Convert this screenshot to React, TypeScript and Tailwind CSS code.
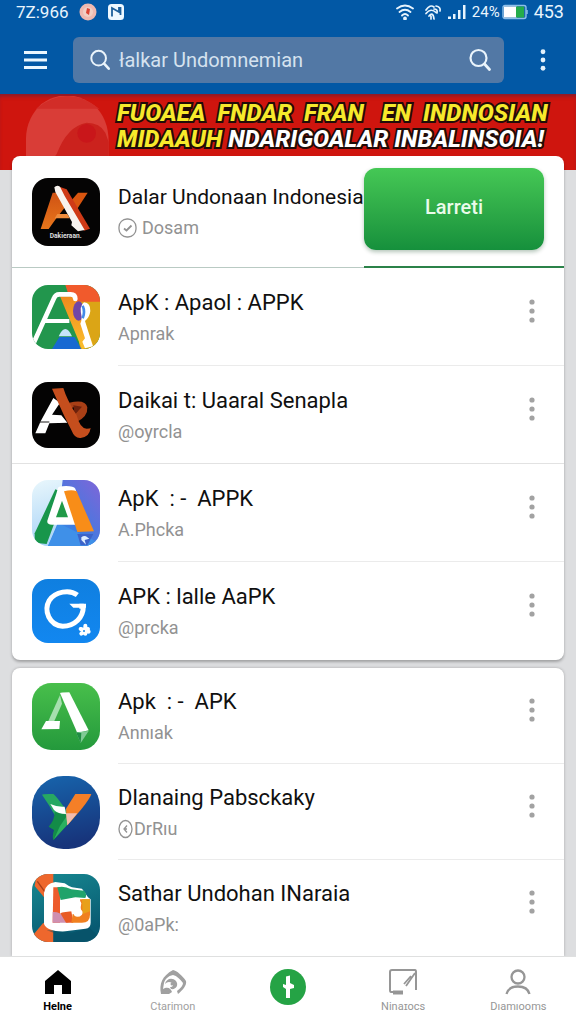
import type { ReactNode } from "react";

type AppRow = {
  title: string;
  subtitle: string;
  badge?: "check" | "ring";
  icon: ReactNode;
  divider?: "inset" | "full";
};

function Dots({ className }: { className: string }) {
  return (
    <svg viewBox="0 0 6 24" className={className} fill="currentColor" aria-hidden="true">
      <circle cx="3" cy="3" r="2.6" />
      <circle cx="3" cy="12" r="2.6" />
      <circle cx="3" cy="21" r="2.6" />
    </svg>
  );
}

function SearchGlyph({ className }: { className: string }) {
  return (
    <svg viewBox="0 0 24 24" className={className} fill="none" stroke="currentColor" strokeWidth="2.2" strokeLinecap="round" aria-hidden="true">
      <circle cx="10.5" cy="10" r="8" />
      <path d="M16.500 16 21.500 21.500" strokeWidth="2.8" />
    </svg>
  );
}

function BlackAxIcon() {
  return (
    <svg viewBox="0 0 204 204" className="h-[68px] w-[68px]" aria-hidden="true">
      <defs>
        <linearGradient id="ax" x1="0" y1="0" x2="0" y2="1">
          <stop offset="0" stopColor="#cf5214" />
          <stop offset="1" stopColor="#e8761b" />
        </linearGradient>
      </defs>
      <rect width="204" height="204" rx="48" fill="#050404" />
      <path d="M62 44H78L100 86 72 122 50 153H26Z" fill="url(#ax)" />
      <path d="M138 44h29l-36 56-20-24Z" fill="#d9550f" />
      <path d="M82 26 104 34 174 152 156 158 84 58Z" fill="#cf3a17" />
      <path d="M67 28Q74 20 84 26L98 54 158 156 138 160 118 142 120 132 70 42Z" fill="#f8f3ef" />
      <path d="M76 108h30l8 13H68Z" fill="#ef8c3c" />
      <text x="101" y="181" textAnchor="middle" fill="#dedede" fontSize="20" fontWeight="700" fontFamily="Roboto, sans-serif">Dakieraan.</text>
    </svg>
  );
}

function RainbowIcon() {
  return (
    <svg viewBox="0 0 204 192" className="h-16 w-[68px]" aria-hidden="true">
      <defs>
        <clipPath id="rb"><rect width="204" height="192" rx="48" /></clipPath>
        <linearGradient id="ry" x1="0" y1="0" x2="0" y2="1">
          <stop offset="0" stopColor="#f08a1e" />
          <stop offset="1" stopColor="#fbbf2c" />
        </linearGradient>
      </defs>
      <g clipPath="url(#rb)">
        <rect width="204" height="192" fill="#22964d" />
        <path d="M100 0h104v60h-60l-34-30Z" fill="#f15a2c" />
        <path d="M124 50h80v142h-60Z" fill="#dba516" />
        <path d="M60 192 82 156h46l20 36Z" fill="#1769d2" />
        <path d="M80 154q20-44 40 0Z" fill="#c6e4fa" />
        <path d="M84 34h46l54 148-34 10Z" fill="url(#ry)" />
        <path d="M6 172 66 40q4-12 16-12h34q14 0 14 14" fill="none" stroke="#fff" strokeWidth="14" strokeLinecap="round" strokeLinejoin="round" />
        <path d="M38 108h74" stroke="#fff" strokeWidth="12" />
        <ellipse cx="140" cy="78" rx="17" ry="29" fill="#7146a5" />
        <path d="M156 52q20 2 19 26-2 18-16 30l10 32 14 44-24 6-8-20 8-10-14-44q4-8 4-20-8-34 7-44Z" fill="#fff" />
        <path d="M152 62q8 18 0 38" fill="none" stroke="#448be8" strokeWidth="8" />
      </g>
    </svg>
  );
}

function BlackArIcon() {
  return (
    <svg viewBox="0 0 204 198" className="h-[66px] w-[68px]" aria-hidden="true">
      <rect width="204" height="198" rx="48" fill="#040303" />
      <path d="M64 48 84 62 60 98 88 100 106 122 52 124 40 154H10L26 118Z" fill="#fff" />
      <path d="M20 120h32" stroke="#1a1a1a" strokeWidth="3" />
      <path d="M112 62q48-12 54 14 2 28-32 44l-16-22q22-8 20-18-8-10-22 0Z" fill="#a83f16" />
      <path d="M124 70 150 74 128 98Z" fill="#6d210c" />
      <path d="M60 20 94 18q10 34 40 82 10 40 30 40 10 0 12-2-4 28-30 30-18 2-28-24-22-42-42-88Z" fill="#c54e1d" />
    </svg>
  );
}

function BlueAIcon() {
  return (
    <svg viewBox="0 0 204 198" className="h-[66px] w-[68px]" aria-hidden="true">
      <defs>
        <clipPath id="ba"><rect width="204" height="198" rx="48" /></clipPath>
        <linearGradient id="bg1" x1="0" y1="0" x2="0.3" y2="1">
          <stop offset="0" stopColor="#e9f7fc" />
          <stop offset="1" stopColor="#a7d2f7" />
        </linearGradient>
        <linearGradient id="bg2" x1="1" y1="0" x2="0" y2="1">
          <stop offset="0" stopColor="#8065d8" />
          <stop offset="0.6" stopColor="#3d7ce0" />
          <stop offset="1" stopColor="#3b96ee" />
        </linearGradient>
      </defs>
      <g clipPath="url(#ba)">
        <rect width="204" height="198" fill="url(#bg1)" />
        <path d="M92 0h112v198H48l28-66Z" fill="url(#bg2)" />
        <path d="M80 130 204 190v8H48Z" fill="#3f90e8" />
        <path d="M70 28 90 36 78 100 44 192 8 188 8 160Z" fill="#18964b" />
        <path d="M78 24q0-6 24-6 24 0 28 8l20 60-8 48H60q-16 0-14-12l26-78Z" fill="#fff" />
        <path d="M90 62 108 112H72Z" fill="#209a48" />
        <path d="M96 34q24-6 38 0l52 120-50 2Z" fill="#f88d18" />
        <path d="M136 162h48l-18 34h-20Z" fill="#3c63c9" />
        <path d="M148 172q10-8 18 0l6 4-14 4 4 14-14-14Z" fill="#dcecff" />
      </g>
    </svg>
  );
}

function BlueGIcon() {
  return (
    <svg viewBox="0 0 204 192" className="h-16 w-[68px]" aria-hidden="true">
      <defs>
        <linearGradient id="gg" x1="0" y1="0" x2="0" y2="1">
          <stop offset="0" stopColor="#0f7fe0" />
          <stop offset="1" stopColor="#1287f0" />
        </linearGradient>
      </defs>
      <rect width="204" height="192" rx="48" fill="url(#gg)" />
      <path d="M136 48C112 30 70 38 52 64 34 96 52 138 92 142c36 0 62-26 62-60h-12" fill="none" stroke="#fff" strokeWidth="15" strokeLinejoin="round" />
      <path d="M112 74h50v12h-38Z" fill="#fff" />
      <g stroke="#fff" strokeWidth="12" strokeLinecap="round">
        <path d="M160 140v24M146 150l24 8M148 164l20-14" />
      </g>
      <circle cx="156" cy="156" r="3" fill="#1683e6" />
    </svg>
  );
}

function GreenAIcon() {
  return (
    <svg viewBox="0 0 204 201" className="h-[67px] w-[68px]" aria-hidden="true">
      <defs>
        <linearGradient id="ga" x1="0" y1="0" x2="0" y2="1">
          <stop offset="0" stopColor="#48bf4b" />
          <stop offset="1" stopColor="#24993c" />
        </linearGradient>
      </defs>
      <rect width="204" height="201" rx="58" fill="url(#ga)" />
      <path d="M84 36 90 62 66 116H48Z" fill="#a6dfae" />
      <path d="M84 30q2-2 28-2l58 114-34 8Z" fill="#fff" />
      <path d="M42 114h42l-2 24-54 1Z" fill="#fff" />
      <path d="M132 148 170 144 146 180Z" fill="#80ca95" />
      <path d="M132 148 146 180 148 150Z" fill="#208e43" />
    </svg>
  );
}

function BlueYIcon() {
  return (
    <svg viewBox="0 0 204 219" className="h-[73px] w-[68px]" aria-hidden="true">
      <defs>
        <linearGradient id="by" x1="0" y1="0" x2="0.2" y2="1">
          <stop offset="0" stopColor="#1765ad" />
          <stop offset="1" stopColor="#17347b" />
        </linearGradient>
      </defs>
      <rect width="204" height="219" rx="94" fill="url(#by)" />
      <path d="M30 56q2-3 34-2 6 2 44 56l-4 16-34-6Q50 84 30 56Z" fill="#27a862" />
      <path d="M68 108 104 116 132 118 64 193Q60 180 66 162L50 152Q68 132 68 108Z" fill="#138c48" />
      <path d="M106 118 132 118 66 190 84 150Z" fill="#2bb060" />
      <path d="M55 84q22 10 43 8l4 22q-24 0-36-12Z" fill="#fff" />
      <path d="M130 54h48q-2 10-30 46l-42 48-4-50Z" fill="#f57f27" />
      <path d="M102 112 136 112 106 148Z" fill="#f1bcae" />
    </svg>
  );
}

function TealIcon() {
  return (
    <svg viewBox="0 0 204 204" className="h-[68px] w-[68px]" aria-hidden="true">
      <defs>
        <clipPath id="tc"><rect width="204" height="204" rx="48" /></clipPath>
        <linearGradient id="tg" x1="0" y1="0" x2="0.4" y2="1">
          <stop offset="0" stopColor="#188a92" />
          <stop offset="1" stopColor="#085a72" />
        </linearGradient>
      </defs>
      <g clipPath="url(#tc)">
        <rect width="204" height="204" fill="url(#tg)" />
        <path d="M14 0h50v28L38 72 8 36Z" fill="#ee672d" />
        <path d="M4 182 34 146 64 172v32H0Z" fill="#ee672d" />
        <path d="M16 22 42 58" stroke="#a93d18" strokeWidth="4" />
        <path d="M44 168 120 176 172 162 204 190v14H64v-28Z" fill="#064c62" opacity=".5" />
        <path d="M36 56Q40 28 70 24L98 28Q112 38 120 40L150 44 168 70 176 76v70q0 16-16 18l-60 8q-54 2-64-22Z" fill="#fff" />
        <path d="M64 40h20v106H62Z" fill="#ed5b2c" />
        <path d="M62 114q20-2 34 14l14 18H62Z" fill="#cf8fb0" />
        <path d="M76 40q20-6 42 6l38 4q10 10 4 22l-30-2-44 8Z" fill="#20a36a" />
        <path d="M84 116 118 112 124 146H102Z" fill="#e85b25" />
        <path d="M144 76h30v46q0 24-24 24h-32l4-26h26Z" fill="#f0801f" />
        <path d="M150 76h24v36l-22 8Z" fill="#e8a01a" />
        <path d="M84 82q18 6 30 0 28-12 34 6 0 10-6 14 14 10 8 20-12 12-24 2l-4-12-22-2-16 8Z" fill="#fff" />
      </g>
    </svg>
  );
}

const firstList: AppRow[] = [
  { title: "ApK : Apaol : APPK", subtitle: "Apnrak", icon: <RainbowIcon />, divider: "inset" },
  { title: "Daikai t: Uaaral Senapla", subtitle: "@oyrcla", icon: <BlackArIcon />, divider: "full" },
  { title: "ApK  : -  APPK", subtitle: "A.Phcka", icon: <BlueAIcon />, divider: "inset" },
  { title: "APK : lalle AaPK", subtitle: "@prcka", icon: <BlueGIcon /> },
];

const secondList: AppRow[] = [
  { title: "Apk  : -  APK", subtitle: "Annıak", icon: <GreenAIcon />, divider: "inset" },
  { title: "Dlanaing Pabsckaky", subtitle: "DrRıu", badge: "ring", icon: <BlueYIcon />, divider: "inset" },
  { title: "Sathar Undohan INaraia", subtitle: "@0aPk:", icon: <TealIcon /> },
];

function Badge({ kind }: { kind: "check" | "ring" }) {
  return kind === "check" ? (
    <svg viewBox="0 0 20 20" className="mr-1 h-5 w-5 shrink-0" fill="none" stroke="currentColor" strokeWidth="1.3" aria-hidden="true">
      <rect x="1" y="1" width="17" height="18" rx="8" />
      <path d="M6 10.500 8.500 12.500 13.500 7.500" strokeWidth="1.8" />
    </svg>
  ) : (
    <svg viewBox="0 0 16 20" className="h-5 w-4 shrink-0" fill="none" stroke="currentColor" strokeWidth="1.3" aria-hidden="true">
      <ellipse cx="7.500" cy="10" rx="6.500" ry="8.500" />
      <path d="M9 6.500 6 10l3 3.500M7 10h2" />
    </svg>
  );
}

function RowText({ title, subtitle, badge, featured }: Pick<AppRow, "title" | "subtitle" | "badge"> & { featured?: boolean }) {
  return (
    <div className="min-w-0">
      <h2 className={`whitespace-pre leading-8 text-[#101010] ${featured ? "text-[21px]" : "text-[22px]"}`}>{title}</h2>
      <p className="flex items-center text-lg leading-[30px] text-[#929292]">
        {badge && <Badge kind={badge} />}
        {subtitle}
      </p>
    </div>
  );
}

function ListRow({ row, height }: { row: AppRow; height: string }) {
  return (
    <li className={`flex ${height} ${row.divider === "full" ? "border-b border-[#e2e2e2]" : ""}`}>
      <div className="flex w-[106px] shrink-0 items-center pl-5">{row.icon}</div>
      <div className={`flex min-w-0 flex-1 items-center ${row.divider === "inset" ? "border-b border-[#ebebeb]" : ""}`}>
        <div className="min-w-0 flex-1 pt-[2px]">
          <RowText title={row.title} subtitle={row.subtitle} badge={row.badge} />
        </div>
        <button type="button" aria-label={`Menu ${row.title}`} className="flex w-16 shrink-0 items-center justify-center self-stretch pb-3 text-[#a2a2a2]">
          <Dots className="h-6 w-[6px]" />
        </button>
      </div>
    </li>
  );
}

function StatusBar() {
  return (
    <div className="flex h-6 items-center justify-between pl-4 pr-3 text-lg leading-6 text-[#e8f4fd]">
      <div className="flex items-center gap-[10px]">
        <span className="text-[17px]">7Z:966</span>
        <svg viewBox="0 0 18 18" className="h-[18px] w-[18px]" aria-hidden="true">
          <circle cx="9" cy="9" r="8.500" fill="#efb9b0" />
          <circle cx="9" cy="9" r="5" fill="#f1cfc5" />
          <path d="M8 5l3 1-1 6-3-2Z" fill="#dc4434" />
        </svg>
        <svg viewBox="0 0 18 18" className="h-[18px] w-[18px]" aria-hidden="true">
          <rect x="1" y="1" width="16" height="16" rx="3.500" fill="#eef8ff" />
          <path d="M5 13.500V5l7 4V5h1.500v7" fill="none" stroke="#1c5f9b" strokeWidth="1.800" />
        </svg>
      </div>
      <div className="flex items-center gap-[6px]">
        <svg viewBox="0 0 18 16" className="mr-1 h-4 w-[18px]" fill="none" stroke="currentColor" strokeWidth="1.800" strokeLinecap="round" aria-hidden="true">
          <path d="M1 4.500q8-6 16 0M3.500 8q5.500-4.500 11 0M6 11.500q3-3 6 0" />
          <circle cx="9" cy="14.500" r="1" fill="currentColor" />
        </svg>
        <svg viewBox="0 0 18 16" className="h-4 w-[18px]" fill="none" stroke="currentColor" strokeWidth="1.700" strokeLinecap="round" aria-hidden="true">
          <path d="M2 6q4-6 8-3M2 9.500q5-6 10-1M5 12q4-5 5 3M12 2q5 1 4 5M10 5q4 0 3 4M7 12v3" />
        </svg>
        <svg viewBox="0 0 18 16" className="h-4 w-[18px]" fill="currentColor" aria-hidden="true">
          <path d="M0 12.500h3V15H0ZM5 10h2.500v5H5ZM10 6h2.500v9H10ZM15 1h2.500v14H15Z" />
        </svg>
        <span className="text-[15px]">24%</span>
        <svg viewBox="0 0 26 16" className="-ml-1 h-4 w-[26px]" aria-hidden="true">
          <rect x="1" y="1.500" width="23" height="13" rx="2" fill="#1d69ac" stroke="#8dbfe9" strokeWidth="1.400" />
          <path d="M2 2.500h13v11H2Z" fill="#fff" />
          <path d="M14 2.500h8v11h-8Z" fill="#25ac4a" />
          <path d="M25 6v4" stroke="#8dbfe9" strokeWidth="1.500" />
        </svg>
        <span>453</span>
      </div>
    </div>
  );
}

const tabBase = "flex flex-col items-center gap-1 pt-3 text-[11px] leading-4";

function BottomNav() {
  return (
    <nav className="sticky bottom-0 z-10 grid h-[68px] grid-cols-5 border-t border-[#dfe0e0] bg-white">
      <a href="#home" className={`${tabBase} font-bold text-black`}>
        <svg viewBox="0 0 28 26" className="h-[26px] w-7" fill="currentColor" aria-hidden="true">
          <path d="M1 12 14 1 27 12V25H18V16H10V25H1Z" />
        </svg>
        <span>Helne</span>
      </a>
      <a href="#explore" className={`${tabBase} text-[#a0a0a0]`}>
        <svg viewBox="0 0 28 26" className="h-[26px] w-7" fill="currentColor" aria-hidden="true">
          <path d="M14 1c4 1 9 5 13 11 1 4-3 9-8 13l-1-3c4-3 6-6 6-8-3-4-6-7-10-8-5 1-8 4-9 8l-1 6 2-1c4-1 6 1 7 4l-3 2-8 0C0 15 3 7 14 1Z" />
          <path d="M6 15c1-5 7-7 11-3 3 4 0 9-5 8l-1-2c3 0 4-2 2-4-3-2-5-1-7 1Z" />
          <circle cx="13" cy="15" r="1.500" />
        </svg>
        <span>Ctarimon</span>
      </a>
      <button type="button" aria-label="Tambah" className="flex justify-center pt-3">
        <svg viewBox="0 0 36 36" className="h-9 w-9" aria-hidden="true">
          <circle cx="18" cy="18" r="18" fill="#25a345" />
          <path d="M16 7.500 20 6.500V14l4 2v3l-4 1v9h-4v-9l-3-2v-3l3 1Z" fill="#fff" />
        </svg>
      </button>
      <a href="#notes" className={`${tabBase} text-[#969696]`}>
        <svg viewBox="0 0 28 26" className="h-[26px] w-7" fill="none" stroke="currentColor" strokeWidth="2" aria-hidden="true">
          <path d="M5 23H2q-1 0-1-2V3q0-2 2-2h23q1 0 1 2v18" />
          <path d="M4 23.500h10" strokeWidth="4" />
          <path d="M26 4 17 17M22 7l-7 8" strokeWidth="1.800" />
        </svg>
        <span>Ninaɪocs</span>
      </a>
      <a href="#profile" className={`${tabBase} text-[#969696]`}>
        <svg viewBox="0 0 28 26" className="h-[26px] w-7" fill="none" stroke="currentColor" strokeWidth="2.300" aria-hidden="true">
          <circle cx="14" cy="8" r="6.500" />
          <path d="M2.500 25q2-7.500 11.500-7.500T25.500 25" />
        </svg>
        <span>Dıamıooms</span>
      </a>
    </nav>
  );
}

export default function App() {
  return (
    <div className="flex min-h-screen flex-col bg-[#dddee0] font-[Roboto,sans-serif]">
      <header className="bg-[#0258a5] pb-[11px]">
        <StatusBar />
        <div className="mt-[13px] flex items-center pl-6">
          <button type="button" aria-label="Menu" className="flex w-[49px] shrink-0 items-center text-[#eaf7ff]">
            <svg viewBox="0 0 24 20" className="h-5 w-6" stroke="currentColor" strokeWidth="2.800" aria-hidden="true">
              <path d="M0 2.500h23M0 10h23M0 17.500h23" />
            </svg>
          </button>
          <form role="search" className="flex h-[46px] min-w-0 flex-1 items-center gap-2 rounded-md bg-[#5278a5] pl-4 pr-3 text-[#eaf4fb]" onSubmit={(e) => e.preventDefault()}>
            <SearchGlyph className="h-[22px] w-[22px] shrink-0" />
            <input
              type="search"
              aria-label="Cari aplikasi"
              placeholder="łalkar Undomnemian"
              className="min-w-0 flex-1 bg-transparent text-xl leading-7 outline-none placeholder:text-[#d5e2ef] placeholder:opacity-100"
            />
            <button type="submit" aria-label="Cari" className="shrink-0">
              <SearchGlyph className="h-6 w-6" />
            </button>
          </form>
          <button type="button" aria-label="Opsi lainnya" className="flex w-[72px] shrink-0 justify-center pl-[6px] text-[#e4f1fb]">
            <Dots className="h-[22px] w-[6px]" />
          </button>
        </div>
      </header>

      <section className="flex h-[76px] gap-2 bg-[#cf150e] pl-[26px] shadow-[inset_0_4px_4px_-2px_#7f1c30]">
        <svg viewBox="0 0 249 219" className="mt-[2px] h-[73px] w-[83px] shrink-0" aria-hidden="true">
          <path d="M0 125Q2 66 46 24 124-30 204 28q44 40 44 110v81H0Z" fill="#d93d37" />
          <path d="M30 38Q124-38 220 38Z" fill="#d22d28" />
          <path d="M92 174q32-84 90-94 40 0 56 30l10 28v81H60Z" fill="#cb221d" />
          <circle cx="182" cy="112" r="28" fill="#c9161a" />
        </svg>
        <div className="whitespace-pre pt-[6px] text-2xl font-extrabold italic leading-[26px] text-[#f7e92b] [-webkit-text-stroke:4px_#210c08] [paint-order:stroke]">
          <p>{"FUOAEA  FNDAR  FRAN   EN  INDNOSIAN"}</p>
          <p>
            MIDAAUH <span className="text-white">NDARIGOALAR INBALINSOIA!</span>
          </p>
        </div>
      </section>

      <main className="relative -mt-[14px] flex flex-1 flex-col gap-2 px-3">
        <section className="rounded-lg bg-white shadow-[0_2px_3px_rgba(0,0,0,0.28)]">
          <div className="flex h-28">
            <div className="flex min-w-0 flex-1 items-center border-b border-[#b9cac3]">
              <div className="flex w-[106px] shrink-0 items-center pl-5">
                <BlackAxIcon />
              </div>
              <RowText title="Dalar Undonaan Indonesia" subtitle="Dosam" badge="check" featured />
            </div>
            <div className="w-[200px] shrink-0 border-b-2 border-[#2b8249] pr-5 pt-3">
              <button type="button" className="h-[82px] w-full rounded-xl bg-linear-to-b from-[#45c855] to-[#15903c] pb-1 text-xl font-medium text-[#eafbea] shadow-[0_2px_4px_rgba(0,60,20,0.3)]">
                Larreti
              </button>
            </div>
          </div>
          <ul>
            {firstList.map((row) => (
              <ListRow key={row.title} row={row} height="h-[98px]" />
            ))}
          </ul>
        </section>

        <section className="flex-1 rounded-t-lg bg-white shadow-[0_0_3px_rgba(0,0,0,0.25)]">
          <ul>
            {secondList.map((row) => (
              <ListRow key={row.title} row={row} height="h-24" />
            ))}
          </ul>
        </section>
      </main>

      <BottomNav />
    </div>
  );
}
